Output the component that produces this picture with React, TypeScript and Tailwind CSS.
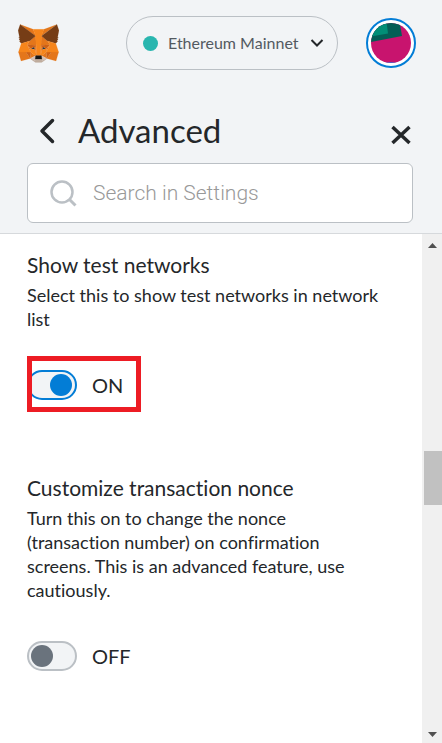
import React, { useState } from "react";

interface ToggleSettingProps {
  id: string;
  title: string;
  description: string;
  defaultOn?: boolean;
  highlighted?: boolean;
}

const FOX_SHAPES: { fill: string; points: string[] }[] = [
  {
    fill: "#e2761b",
    points: ["274.1,35.5 174.6,109.4 193,65.8"],
  },
  {
    fill: "#e4761b",
    points: [
      "44.4,35.5 143.1,110.1 125.6,65.8",
      "238.3,206.8 211.8,247.4 268.5,263 284.8,207.7",
      "33.9,207.7 50.1,263 106.8,247.4 80.3,206.8",
      "103.6,138.2 87.8,162.1 144.1,164.6 142.1,104.1",
      "214.9,138.2 175.9,103.4 174.6,164.6 230.8,162.1",
      "106.8,247.4 140.6,230.9 111.4,208.1",
      "177.9,230.9 211.8,247.4 207.1,208.1",
    ],
  },
  {
    fill: "#d7c1b3",
    points: [
      "211.8,247.4 177.9,230.9 180.6,253 180.3,262.3",
      "106.8,247.4 138.3,262.3 138.1,253 140.6,230.9",
    ],
  },
  {
    fill: "#233447",
    points: [
      "138.8,193.5 110.6,185.2 130.5,176.1",
      "179.7,193.5 188,176.1 208,185.2",
    ],
  },
  {
    fill: "#cd6116",
    points: [
      "106.8,247.4 111.6,206.8 80.3,207.7",
      "207,206.8 211.8,247.4 238.3,207.7",
      "230.8,162.1 174.6,164.6 179.8,193.5 188.1,176.1 208.1,185.2",
      "110.6,185.2 130.6,176.1 138.8,193.5 144.1,164.6 87.8,162.1",
    ],
  },
  {
    fill: "#e4751f",
    points: [
      "87.8,162.1 111.4,208.1 110.6,185.2",
      "208.1,185.2 207.1,208.1 230.8,162.1",
      "144.1,164.6 138.8,193.5 145.4,227.6 146.9,182.7",
      "174.6,164.6 171.9,182.6 173.1,227.6 179.8,193.5",
    ],
  },
  {
    fill: "#f6851b",
    points: [
      "179.8,193.5 173.1,227.6 177.9,230.9 207.1,208.1 208.1,185.2",
      "110.6,185.2 111.4,208.1 140.6,230.9 145.4,227.6 138.8,193.5",
    ],
  },
  {
    fill: "#c0ad9e",
    points: [
      "180.3,262.3 180.6,253 178.1,250.8 140.4,250.8 138.1,253 138.3,262.3 106.8,247.4 117.8,256.4 140.1,271.9 178.4,271.9 200.8,256.4 211.8,247.4",
    ],
  },
  {
    fill: "#161616",
    points: [
      "177.9,230.9 173.1,227.6 145.4,227.6 140.6,230.9 138.1,253 140.4,250.8 178.1,250.8 180.6,253",
    ],
  },
  {
    fill: "#763d16",
    points: [
      "278.3,114.2 286.8,73.4 274.1,35.5 177.9,106.9 214.9,138.2 267.2,153.5 278.8,140 273.8,136.4 281.8,129.1 275.6,124.3 283.6,118.2",
      "31.8,73.4 40.3,114.2 34.9,118.2 42.9,124.3 36.8,129.1 44.8,136.4 39.8,140 51.3,153.5 103.6,138.2 140.6,106.9 44.4,35.5",
    ],
  },
  {
    fill: "#f6851b",
    points: [
      "267.2,153.5 214.9,138.2 230.8,162.1 207.1,208.1 238.3,207.7 284.8,207.7",
      "103.6,138.2 51.3,153.5 33.9,207.7 80.3,207.7 111.4,208.1 87.8,162.1",
      "174.6,164.6 177.9,106.9 193.1,65.8 125.6,65.8 140.6,106.9 144.1,164.6 145.3,182.8 145.4,227.6 173.1,227.6 173.3,182.8",
    ],
  },
];

const FoxLogo: React.FC = () => (
  <svg viewBox="31 35 256 238" className="w-[41px] h-[39px]" aria-hidden="true">
    {FOX_SHAPES.map((shape) =>
      shape.points.map((points) => (
        <polygon
          key={points}
          points={points}
          fill={shape.fill}
          stroke={shape.fill}
          strokeLinejoin="round"
        />
      ))
    )}
  </svg>
);

const AccountAvatar: React.FC = () => (
  <svg viewBox="0 0 50 50" className="w-[50px] h-[50px]" aria-hidden="true">
    <defs>
      <clipPath id="avatar-clip">
        <circle cx="25" cy="25" r="20" />
      </clipPath>
    </defs>
    <circle cx="25" cy="25" r="24" fill="#ffffff" stroke="#037dd6" strokeWidth="2" />
    <g clipPath="url(#avatar-clip)">
      <rect width="50" height="50" fill="#c8146e" />
      <path d="M0 25 L36 18 L33 0 L0 0 Z" fill="#045e56" />
      <path d="M0 19.5 L22 15.5 L20 0 L0 0 Z" fill="#018e77" />
      <path d="M18 45 Q25 43.5 32 45 Z" fill="#2a6fe0" />
    </g>
  </svg>
);

const ToggleSetting: React.FC<ToggleSettingProps> = ({
  id,
  title,
  description,
  defaultOn = false,
  highlighted = false,
}) => {
  const [on, setOn] = useState(defaultOn);

  return (
    <section>
      <h2 className="text-[21px] leading-7">{title}</h2>
      <p className="mt-1 text-lg leading-6">{description}</p>
      <div className="relative mt-[38px] flex h-8 items-center">
        <label htmlFor={id} className="flex cursor-pointer items-center gap-[15px]">
          <input
            id={id}
            type="checkbox"
            checked={on}
            onChange={() => setOn(!on)}
            className="sr-only"
          />
          <span
            className={`flex h-[30px] w-[50px] items-center rounded-full border-2 bg-[#f2f4f6] pr-[3px] pl-0.5 ${
              on ? "justify-end border-[#037dd6]" : "justify-start border-[#bbc0c5]"
            }`}
          >
            <span
              className={`size-[22px] rounded-full ${
                on ? "bg-[#037dd6]" : "bg-[#6a737d]"
              }`}
            />
          </span>
          <span className="text-xl leading-7">{on ? "ON" : "OFF"}</span>
        </label>
        {highlighted && (
          <div className="pointer-events-none absolute -top-[13px] left-0 h-14 w-[114px] border-5 border-[#ed1c24]" />
        )}
      </div>
    </section>
  );
};

const ScrollTrack: React.FC = () => (
  <div className="flex w-5 shrink-0 flex-col items-end bg-[#f0f0f0]" aria-hidden="true">
    <svg viewBox="0 0 18 18" className="size-[18px]">
      <path d="M4 14 L8.5 9 L13 14 Z" fill="#505050" />
    </svg>
    <div className="grow-[199]" />
    <div className="h-[54px] w-[18px] bg-[#c1c1c1]" />
    <div className="grow-[220]" />
    <svg viewBox="0 0 18 18" className="size-[18px]">
      <path d="M4 7 L13 7 L8.5 12 Z" fill="#505050" />
    </svg>
  </div>
);

const App: React.FC = () => {
  const [query, setQuery] = useState("");

  return (
    <div className="flex min-h-screen flex-col bg-white font-[Lato,sans-serif] text-[#24272a] [font-variant-ligatures:none]">
      <header className="border-b border-[#d6d9dc] bg-[#f2f4f6] pb-2.5">
        <div className="flex items-center pt-4 pr-[26px] pl-[18px]">
          <FoxLogo />
          <button
            type="button"
            className="mr-7 ml-auto flex h-[54px] w-[212px] items-center rounded-full border border-[#bbc0c5] pl-4 text-[#535a61]"
          >
            <span className="size-[15px] rounded-full bg-[#29b6af]" />
            <span className="ml-2.5 text-base leading-6 whitespace-nowrap">Ethereum Mainnet</span>
            <svg viewBox="0 0 14 8" className="mr-[13px] ml-auto h-2 w-3.5" aria-hidden="true">
              <path d="M1.5 1 L7 6.5 L12.5 1" fill="none" stroke="#24272a" strokeWidth="2" />
            </svg>
          </button>
          <button type="button" aria-label="Account" className="rounded-full">
            <AccountAvatar />
          </button>
        </div>

        <div className="mt-10 flex h-[53px] items-start pr-[30px] pl-[39px]">
          <button type="button" aria-label="Back" className="mt-2">
            <svg viewBox="0 0 16 26" className="h-[26px] w-4" aria-hidden="true">
              <path
                d="M13.5 2.5 L3 13 L13.5 23.5"
                fill="none"
                stroke="#24272a"
                strokeWidth="3.5"
                strokeLinecap="round"
                strokeLinejoin="round"
              />
            </svg>
          </button>
          <h1 className="ml-[23px] text-[33px] leading-10">Advanced</h1>
          <button type="button" aria-label="Close" className="mt-3.5 ml-auto">
            <svg viewBox="0 0 22 22" className="size-[22px]" aria-hidden="true">
              <path d="M2.5 3 L19.5 19 M19.5 3 L2.5 19" stroke="#24272a" strokeWidth="3.5" />
            </svg>
          </button>
        </div>

        <div className="mr-[29px] ml-[27px] flex h-[60px] items-center gap-4 rounded-md border border-[#bbc0c5] bg-white pr-4 pl-[22px]">
          <svg viewBox="0 0 27 27" className="size-[27px] shrink-0" aria-hidden="true">
            <circle cx="12" cy="12" r="10.5" fill="none" stroke="#bbc0c5" strokeWidth="2.5" />
            <path d="M19 19 L25.5 25.5" stroke="#bbc0c5" strokeWidth="3" />
          </svg>
          <input
            type="text"
            aria-label="Search in Settings"
            placeholder="Search in Settings"
            value={query}
            onChange={(e) => setQuery(e.target.value)}
            className="min-w-0 flex-1 bg-transparent font-[Roboto,sans-serif] text-[21px] leading-7 font-light outline-none placeholder:text-[#999999]"
          />
        </div>
      </header>

      <div className="flex flex-1">
        <main className="flex flex-1 flex-col gap-[73px] pt-[17px] pr-[42px] pb-8 pl-[27px]">
          <ToggleSetting
            id="show-test-networks"
            title="Show test networks"
            description="Select this to show test networks in network list"
            defaultOn
            highlighted
          />
          <ToggleSetting
            id="customize-nonce"
            title="Customize transaction nonce"
            description="Turn this on to change the nonce (transaction number) on confirmation screens. This is an advanced feature, use cautiously."
          />
        </main>
        <ScrollTrack />
      </div>
    </div>
  );
};

export default App;
